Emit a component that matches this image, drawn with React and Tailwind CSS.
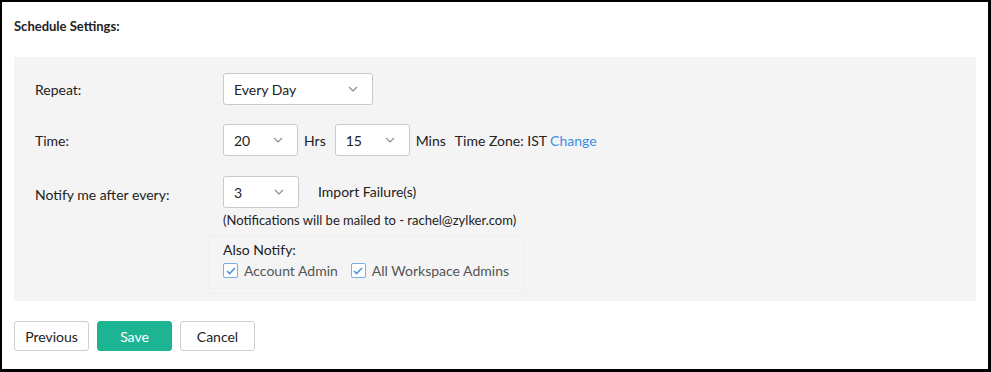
import React from 'react';

const Chevron = () => (
    <svg width="10" height="6" viewBox="0 0 10 6" fill="none" className="shrink-0">
        <path d="M1 1l4 4 4-4" stroke="#888" strokeWidth="1.1" />
    </svg>
);

const Select = ({ value, width }) => (
    <div className={`flex h-[32px] items-center justify-between rounded-[3px] border border-[#c9c9c9] bg-white pl-[10px] pr-[14px] text-[14px] text-[#222] ${width}`}>
        <span className="mt-[1px]">{value}</span>
        <Chevron />
    </div>
);

const Check = ({ label }) => (
    <label className="flex items-center gap-[6px] text-[14px] text-[#555]">
        <span className="flex h-[15px] w-[15px] items-center justify-center rounded-[2px] border border-[#7aaee8] bg-white">
            <svg width="10" height="8" viewBox="0 0 10 8" fill="none">
                <path d="M1 4l2.6 2.6L9 1" stroke="#4a97e4" strokeWidth="1.6" />
            </svg>
        </span>
        {label}
    </label>
);

const Button = ({ children, primary }) => (
    <button
        className={`h-[30px] w-[75px] rounded-[3px] border text-[14px] ${
            primary ? "border-[#1db494] bg-[#1db494] text-white" : "border-[#cfcfcf] bg-white text-[#222]"
        }`}
    >
        {children}
    </button>
);

export default function App() {
    return (
        <div className="h-[372px] w-[991px] border-[2px] border-r-[3px] border-b-[3px] border-black bg-white font-['Lato','Noto_Sans',sans-serif] text-[#222]">
            <div className="px-[12px] pt-[15px]">
                <div className="text-[13px] font-bold">Schedule Settings:</div>

                <div className="mt-[20px] flex flex-col bg-[#f4f4f4] pb-[7px] pl-[21px] pt-[16px]">
                    <div className="flex items-center">
                        <div className="mt-[1px] w-[188px] text-[14px]">Repeat:</div>
                        <Select value="Every Day" width="w-[150px]" />
                    </div>

                    <div className="mt-[19px] flex items-center text-[14px]">
                        <div className="mt-[2px] w-[188px]">Time:</div>
                        <Select value="20" width="w-[75px]" />
                        <span className="ml-[6px] mr-[9px] mt-[2px]">Hrs</span>
                        <Select value="15" width="w-[75px]" />
                        <span className="ml-[6px] mt-[2px]">Mins</span>
                        <span className="ml-[9px] mt-[2px]">Time Zone: IST</span>
                        <span className="ml-[3px] mt-[2px] text-[#3b8ee3]">Change</span>
                    </div>

                    <div className="mt-[20px] flex items-start text-[14px]">
                        <div className="mt-[8px] w-[188px]">Notify me after every:</div>
                        <div className="flex flex-col">
                            <div className="flex items-center">
                                <Select value="3" width="w-[76px]" />
                                <span className="ml-[19px]">Import Failure(s)</span>
                            </div>
                            <div className="mt-[3px] text-[13px]">(Notifications will be mailed to - rachel@zylker.com)</div>
                            <div className="-ml-[15px] mt-[5px] w-[316px] border border-[#efefef] pb-[12px] pl-[14px] pt-[3px]">
                                <div className="text-[14px]">Also Notify:</div>
                                <div className="flex items-center gap-[13px]">
                                    <Check label="Account Admin" />
                                    <Check label="All Workspace Admins" />
                                </div>
                            </div>
                        </div>
                    </div>
                </div>

                <div className="mt-[20px] flex gap-[8px]">
                    <Button>Previous</Button>
                    <Button primary>Save</Button>
                    <Button>Cancel</Button>
                </div>
            </div>
        </div>
    );
}
